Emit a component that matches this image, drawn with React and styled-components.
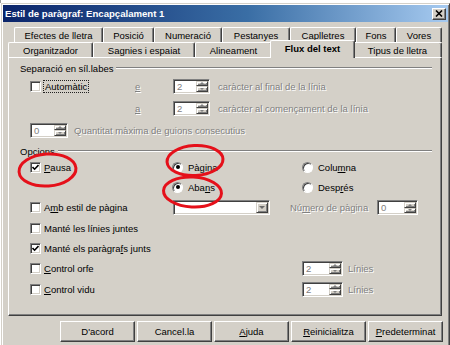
import React from 'react';
import styled, { createGlobalStyle } from 'styled-components';

const FONT = `"Liberation Sans", Arial, sans-serif`;
const FACE = '#d4d0c8';
const DARK = '#404040';
const SHADOW = '#808080';

const GlobalStyle = createGlobalStyle`
  html, body { margin: 0; padding: 0; }
  body {
    width: 450px; height: 345px; overflow: hidden; background: #fff;
    font-family: ${FONT}; font-size: 9.5px; color: #000;
  }
  #root { width: 450px; height: 345px; overflow: hidden; }
`;

const Screen = styled.div`
  position: relative;
  width: 450px;
  height: 345px;
  overflow: hidden;
  background: #fff;
`;

const BackStrip = styled.div`
  height: 3px;
  background: #fff;
  border-left: 1px solid #9a9a9a;
  box-sizing: border-box;
`;

const Dialog = styled.div`
  margin-left: 1px;
  width: 449px;
  height: 360px;
  box-sizing: border-box;
  background: ${FACE};
  border: 1px solid;
  border-color: ${FACE} ${DARK} ${DARK} ${FACE};
  box-shadow: inset 1px 1px #fff, inset -1px -1px ${SHADOW};
  padding: 1px;
  display: flex;
  flex-direction: column;
`;

const TitleBar = styled.div`
  height: 17px;
  flex: none;
  display: flex;
  align-items: center;
  justify-content: space-between;
  padding: 0 2px 0 2px;
  background: linear-gradient(to right, #0a246a, #3a6ea5 55%, #a6caf0);
`;

const TitleText = styled.span`
  color: #fff;
  font-weight: bold;
  font-size: 9.6px;
  white-space: nowrap;
`;

const CloseButton = styled.span`
  width: 14px;
  height: 12px;
  box-sizing: border-box;
  background: ${FACE};
  border: 1px solid;
  border-color: #fff ${DARK} ${DARK} #fff;
  box-shadow: inset -1px -1px ${SHADOW};
  display: flex;
  align-items: center;
  justify-content: center;
`;

const Tabs = styled.div`
  margin-top: 5px;
  display: flex;
  flex-direction: column;
`;

const TabRow = styled.div`
  display: flex;
  align-items: flex-end;
  height: 15px;
  margin-left: ${p => p.$indent}px;
`;

const Tab = styled.div`
  position: relative;
  z-index: ${p => (p.$active ? 2 : 1)};
  width: ${p => p.$w + (p.$active ? 4 : 0)}px;
  height: ${p => (p.$active ? 18 : 15)}px;
  margin: ${p => (p.$active ? '0 -2px -1px -2px' : '0')};
  box-sizing: border-box;
  flex: none;
  background: ${FACE};
  border-top: 1px solid #fff;
  border-left: 1px solid #fff;
  border-right: 1px solid ${DARK};
  box-shadow: inset -1px 0 ${SHADOW};
  border-radius: 2px 2px 0 0;
  display: flex;
  align-items: center;
  justify-content: center;
  padding-bottom: ${p => (p.$active ? 2 : 0)}px;
  font-weight: ${p => (p.$active ? 'bold' : 'normal')};
  white-space: nowrap;
`;

const Panel = styled.div`
  margin-left: 5px;
  width: 434px;
  height: 259px;
  box-sizing: border-box;
  flex: none;
  border-top: 1px solid #fff;
  border-left: 1px solid #fff;
  border-right: 1px solid ${DARK};
  border-bottom: 1px solid ${DARK};
  box-shadow: inset -1px -1px ${SHADOW};
  padding: 4px 9px 0 11px;
  display: flex;
  flex-direction: column;
`;

const SectionHeader = styled.div`
  display: flex;
  align-items: center;
  gap: 3px;
  height: 12px;
  margin-top: ${p => p.$mt || 0}px;
  white-space: nowrap;
`;

const Etched = styled.span`
  flex: 1;
  height: 0;
  border-top: 1px solid ${SHADOW};
  border-bottom: 1px solid #fff;
`;

const SectionBody = styled.div`
  padding-left: 10px;
  margin-top: ${p => p.$mt || 0}px;
  display: flex;
  flex-direction: column;
`;

const Row = styled.div`
  display: flex;
  align-items: center;
  height: ${p => p.$h || 20}px;
`;

const Cell = styled.div`
  display: flex;
  align-items: center;
  flex: none;
  box-sizing: border-box;
  width: ${p => (p.$w ? `${p.$w}px` : 'auto')};
  padding-left: ${p => p.$pl || 0}px;
  gap: ${p => p.$gap || 0}px;
  white-space: nowrap;
`;

const Option = styled.label`
  display: inline-flex;
  align-items: center;
  gap: ${p => p.$gap || 3}px;
  white-space: nowrap;
`;

const Focus = styled.span`
  outline: 1px dotted #222;
  outline-offset: 0px;
  padding: 0 1px;
  line-height: 11px;
`;

const Box = styled.span`
  width: 11px;
  height: 11px;
  box-sizing: border-box;
  flex: none;
  background: #fff;
  border: 1px solid;
  border-color: ${SHADOW} #fff #fff ${SHADOW};
  box-shadow: inset 1px 1px ${DARK}, inset -1px -1px ${FACE};
  display: inline-flex;
  align-items: center;
  justify-content: center;
`;

const RadioDot = styled.span`
  width: 11px;
  height: 11px;
  box-sizing: border-box;
  flex: none;
  border-radius: 50%;
  background: #fff;
  border: 1px solid;
  border-color: ${SHADOW} #fff #fff ${SHADOW};
  box-shadow: inset 1px 1px ${DARK};
  display: inline-flex;
  align-items: center;
  justify-content: center;
  &::after {
    content: '';
    width: 4px;
    height: 4px;
    border-radius: 50%;
    background: ${p => (p.$checked ? '#000' : 'transparent')};
  }
`;

const Disabled = styled.span`
  color: ${SHADOW};
  text-shadow: 1px 1px 0 #fff;
  white-space: nowrap;
`;

const SpinBox = styled.span`
  width: ${p => p.$w}px;
  height: 15px;
  box-sizing: border-box;
  flex: none;
  display: flex;
  background: #fff;
  border: 1px solid;
  border-color: ${SHADOW} #fff #fff ${SHADOW};
  box-shadow: inset 1px 1px ${DARK}, inset -1px -1px ${FACE};
  padding: 1px;
`;

const SpinValue = styled.span`
  flex: 1;
  padding-left: 2px;
  line-height: 11px;
  color: ${SHADOW};
`;

const SpinButtons = styled.span`
  width: 12px;
  display: flex;
  flex-direction: column;
`;

const SpinButton = styled.span`
  flex: 1;
  box-sizing: border-box;
  background: ${FACE};
  border: 1px solid;
  border-color: ${FACE} ${DARK} ${DARK} ${FACE};
  box-shadow: inset 1px 1px #fff, inset -1px -1px ${SHADOW};
  display: flex;
  align-items: center;
  justify-content: center;
`;

const Arrow = styled.span`
  width: 0;
  height: 0;
  border-left: 2.5px solid transparent;
  border-right: 2.5px solid transparent;
  ${p => (p.$up ? `border-bottom: 2px solid ${SHADOW};` : `border-top: 2px solid ${SHADOW};`)}
`;

const Dropdown = styled.span`
  width: 97px;
  height: 15px;
  margin-left: 1px;
  box-sizing: border-box;
  flex: none;
  display: flex;
  justify-content: flex-end;
  background: #fff;
  border: 1px solid;
  border-color: ${SHADOW} #fff #fff ${SHADOW};
  box-shadow: inset 1px 1px ${DARK}, inset -1px -1px ${FACE};
  padding: 1px;
`;

const DropButton = styled.span`
  width: 12px;
  box-sizing: border-box;
  background: ${FACE};
  border: 1px solid;
  border-color: ${FACE} ${DARK} ${DARK} ${FACE};
  box-shadow: inset 1px 1px #fff, inset -1px -1px ${SHADOW};
  display: flex;
  align-items: center;
  justify-content: center;
  &::after {
    content: '';
    width: 0;
    height: 0;
    border-left: 3px solid transparent;
    border-right: 3px solid transparent;
    border-top: 3px solid #6a6a6a;
  }
`;

const ButtonRow = styled.div`
  display: flex;
  justify-content: flex-end;
  gap: 2px;
  margin-top: 5px;
  padding-right: 5px;
`;

const Button = styled.span`
  width: 75px;
  height: 21px;
  box-sizing: border-box;
  background: ${FACE};
  border: 1px solid;
  border-color: #fff ${DARK} ${DARK} #fff;
  box-shadow: inset -1px -1px ${SHADOW};
  display: flex;
  align-items: center;
  justify-content: center;
  white-space: nowrap;
`;

const Marks = styled.svg`
  position: absolute;
  left: 0;
  top: 0;
  pointer-events: none;
`;

const Check = ({ checked }) => (
  <Box>
    {checked && (
      <svg width="7" height="7" viewBox="0 0 7 7">
        <path d="M0.5 3 L2.6 5.2 L6.5 1" fill="none" stroke="#000" strokeWidth="1.6" />
      </svg>
    )}
  </Box>
);

const Spin = ({ w, value }) => (
  <SpinBox $w={w}>
    <SpinValue>{value}</SpinValue>
    <SpinButtons>
      <SpinButton><Arrow $up /></SpinButton>
      <SpinButton><Arrow /></SpinButton>
    </SpinButtons>
  </SpinBox>
);

const row1 = [
  ['Efectes de lletra', 89], ['Posició', 51], ['Numeració', 68], ['Pestanyes', 68],
  ['Caplletres', 66], ['Fons', 40], ['Vores', 46],
];
const row2 = [
  ['Organitzador', 85], ['Sagnies i espaiat', 102], ['Alineament', 77],
  ['Flux del text', 81, true], ['Tipus de lletra', 89],
];

export default function App() {
  return (
    <Screen>
      <GlobalStyle />
      <BackStrip />
      <Dialog>
        <TitleBar>
          <TitleText>Estil de paràgraf: Encapçalament 1</TitleText>
          <CloseButton>
            <svg width="8" height="7" viewBox="0 0 8 7">
              <path d="M1 0.5 L7 6.5 M7 0.5 L1 6.5" stroke="#000" strokeWidth="1.6" />
            </svg>
          </CloseButton>
        </TitleBar>

        <Tabs>
          <TabRow $indent={11}>
            {row1.map(([t, w]) => <Tab key={t} $w={w}>{t}</Tab>)}
          </TabRow>
          <TabRow $indent={5}>
            {row2.map(([t, w, a]) => <Tab key={t} $w={w} $active={a}>{t}</Tab>)}
          </TabRow>
        </Tabs>

        <Panel>
          <SectionHeader>
            <span>Separació en síl.labes</span>
            <Etched />
          </SectionHeader>
          <SectionBody $mt={1}>
            <Row $h={22}>
              <Cell $w={103}>
                <Option><Check /><Focus>Automàtic</Focus></Option>
              </Cell>
              <Cell $w={40} $pl={2}><Disabled><u>e</u></Disabled></Cell>
              <Cell $gap={8}>
                <Spin w={37} value="2" />
                <Disabled>caràcter al final de la línia</Disabled>
              </Cell>
            </Row>
            <Row $h={22}>
              <Cell $w={103} />
              <Cell $w={40} $pl={2}><Disabled><u>a</u></Disabled></Cell>
              <Cell $gap={8}>
                <Spin w={37} value="2" />
                <Disabled>caràcter al començament de la línia</Disabled>
              </Cell>
            </Row>
            <Row $h={22}>
              <Cell $gap={6}>
                <Spin w={38} value="0" />
                <Disabled>Quantitat màxima de guions consecutius</Disabled>
              </Cell>
            </Row>
          </SectionBody>

          <SectionHeader $mt={4}>
            <span>Opcions</span>
            <Etched />
          </SectionHeader>
          <SectionBody>
            <Row $h={20}>
              <Cell $w={142}>
                <Option><Check checked /><span><u>P</u>ausa</span></Option>
              </Cell>
              <Cell $w={130}>
                <Option $gap={5}><RadioDot $checked /><span>Pàgina</span></Option>
              </Cell>
              <Cell>
                <Option $gap={5}><RadioDot /><span>Colu<u>m</u>na</span></Option>
              </Cell>
            </Row>
            <Row $h={20}>
              <Cell $w={142} />
              <Cell $w={130}>
                <Option $gap={5}><RadioDot $checked /><span>Aba<u>n</u>s</span></Option>
              </Cell>
              <Cell>
                <Option $gap={5}><RadioDot /><span>Desp<u>r</u>és</span></Option>
              </Cell>
            </Row>
            <Row $h={21}>
              <Cell $w={142}>
                <Option><Check /><span>A<u>m</u>b estil de pàgina</span></Option>
              </Cell>
              <Cell $w={118}>
                <Dropdown><DropButton /></Dropdown>
              </Cell>
              <Cell $w={87}>
                <Disabled>Nú<u>m</u>ero de pàgina</Disabled>
              </Cell>
              <Cell>
                <Spin w={41} value="0" />
              </Cell>
            </Row>
            <Row $h={20}>
              <Cell>
                <Option><Check /><span>Manté les línies juntes</span></Option>
              </Cell>
            </Row>
            <Row $h={20}>
              <Cell>
                <Option><Check checked /><span>Manté els paràgra<u>f</u>s junts</span></Option>
              </Cell>
            </Row>
            <Row $h={20}>
              <Cell $w={272}>
                <Option><Check /><span><u>C</u>ontrol orfe</span></Option>
              </Cell>
              <Cell $gap={5}>
                <Spin w={41} value="2" />
                <Disabled>Línies</Disabled>
              </Cell>
            </Row>
            <Row $h={22}>
              <Cell $w={272}>
                <Option><Check /><span><u>C</u>ontrol vidu</span></Option>
              </Cell>
              <Cell $gap={5}>
                <Spin w={41} value="2" />
                <Disabled>Línies</Disabled>
              </Cell>
            </Row>
          </SectionBody>
        </Panel>

        <ButtonRow>
          <Button>D'acord</Button>
          <Button>Cancel.la</Button>
          <Button><span><u>A</u>juda</span></Button>
          <Button><span><u>R</u>einicialitza</span></Button>
          <Button><span><u>P</u>redeterminat</span></Button>
        </ButtonRow>
      </Dialog>

      <Marks width="450" height="345" viewBox="0 0 450 345">
        <g fill="none" stroke="#e5101a" strokeWidth="3">
          <ellipse cx="47.5" cy="170" rx="28.5" ry="16" transform="rotate(-4 47.5 170)" />
          <ellipse cx="195" cy="160.5" rx="28" ry="15" transform="rotate(-3 195 160.5)" />
          <ellipse cx="192.5" cy="192" rx="29" ry="15" transform="rotate(3 192.5 192)" />
        </g>
      </Marks>
    </Screen>
  );
}
